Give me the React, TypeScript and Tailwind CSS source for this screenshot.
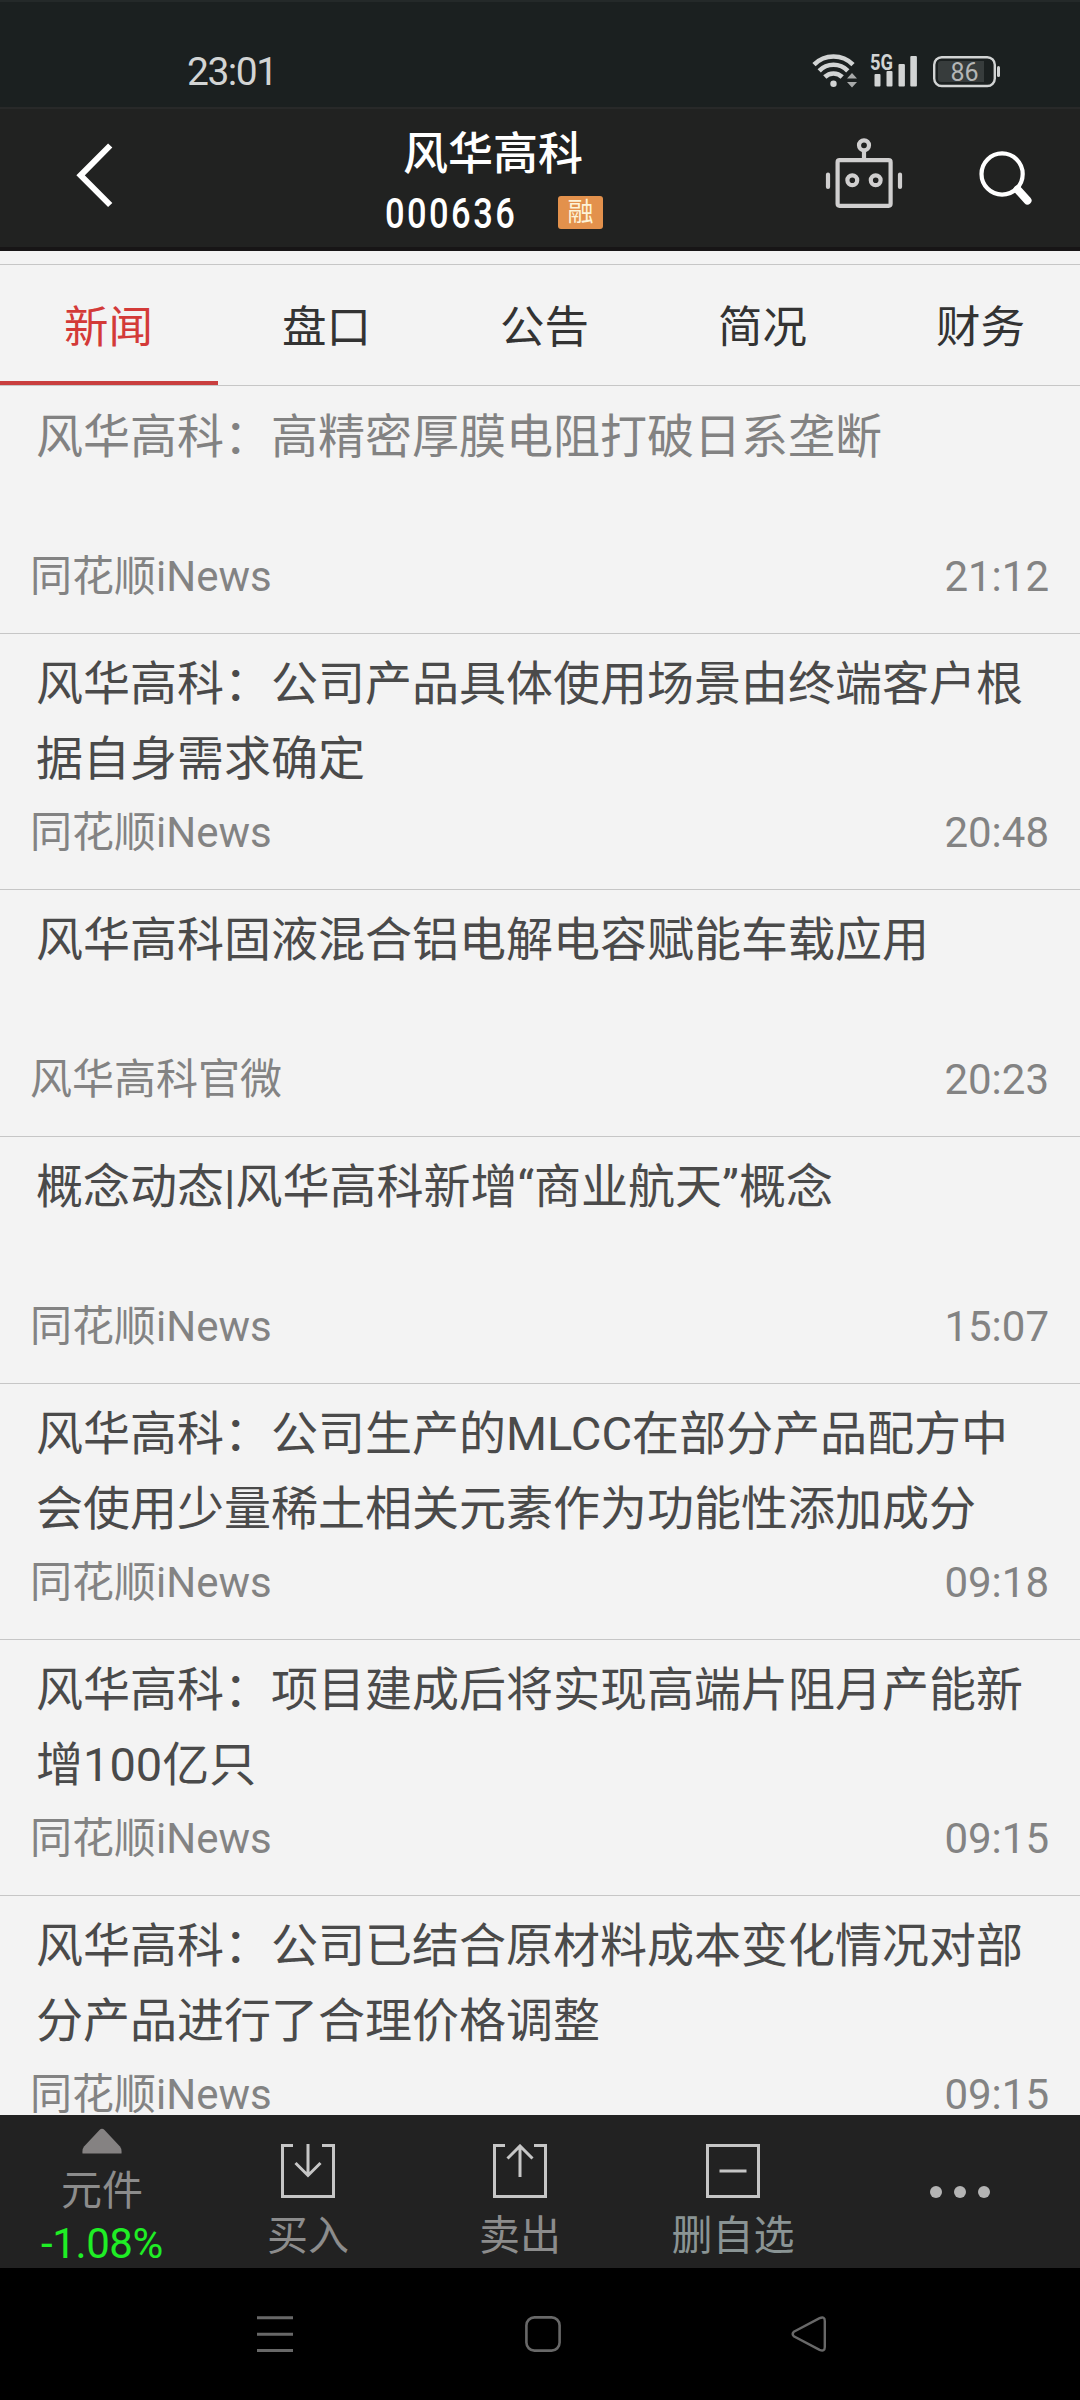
import React from 'react';

interface NewsItem {
  title: string;
  source: string;
  time: string;
  lines: 1 | 2;
  read?: boolean;
}

const tabs = ['新闻', '盘口', '公告', '简况', '财务'];

const news: NewsItem[] = [
  { title: '风华高科：高精密厚膜电阻打破日系垄断', source: '同花顺iNews', time: '21:12', lines: 1, read: true },
  { title: '风华高科：公司产品具体使用场景由终端客户根据自身需求确定', source: '同花顺iNews', time: '20:48', lines: 2 },
  { title: '风华高科固液混合铝电解电容赋能车载应用', source: '风华高科官微', time: '20:23', lines: 1 },
  { title: '概念动态|风华高科新增“商业航天”概念', source: '同花顺iNews', time: '15:07', lines: 1 },
  { title: '风华高科：公司生产的MLCC在部分产品配方中会使用少量稀土相关元素作为功能性添加成分', source: '同花顺iNews', time: '09:18', lines: 2 },
  { title: '风华高科：项目建成后将实现高端片阻月产能新增100亿只', source: '同花顺iNews', time: '09:15', lines: 2 },
  { title: '风华高科：公司已结合原材料成本变化情况对部分产品进行了合理价格调整', source: '同花顺iNews', time: '09:15', lines: 2 },
];

const StatusBar: React.FC = () => (
  <div className="flex h-[107px] shrink-0 items-start justify-between border-t-2 border-[#242929] bg-[#1b2020] pl-[187px] pr-[79px]">
    <span className="mt-[45px] text-[39px] leading-[50px] tracking-[-1.5px] text-[#d2d4d4]">23:01</span>
    <div className="mt-[50px] flex items-start">
      {/* Wifi */}
      <svg className="overflow-visible" width="46" height="36" viewBox="0 0 46 36" fill="none" stroke="#d2d4d4" strokeWidth="4.6">
        <path d="M0 12.6A27.5 27.5 0 0 1 39 12.6" />
        <path d="M5.2 18.8A20 20 0 0 1 33.8 18.8" />
        <path d="M10.8 25A12.4 12.4 0 0 1 28.2 25" />
        <circle cx="19.5" cy="31.7" r="3.2" fill="#d2d4d4" stroke="none" />
        <path d="M33 26.5L38 21L43 26.5ZM33 30L43 30L38 35.4Z" fill="#a8aaaa" stroke="none" />
      </svg>
      {/* Signal */}
      <svg className="ml-[10px] overflow-visible" width="48" height="36" viewBox="0 0 48 36" fill="#d2d4d4">
        <text x="0" y="17.5" fontSize="21.5" fontWeight="700" fontFamily="Roboto" textLength="23" lengthAdjust="spacingAndGlyphs">5G</text>
        <rect x="4.5" y="22" width="6" height="12.5" rx="1" />
        <rect x="16.5" y="19" width="6" height="15.5" rx="1" />
        <rect x="28.5" y="12" width="6.4" height="22.5" rx="1" />
        <rect x="40.3" y="4" width="6.6" height="30.5" rx="1" />
      </svg>
      {/* Battery */}
      <svg className="ml-[15px]" width="68" height="36" viewBox="0 0 68 36">
        <rect x="1.2" y="5.2" width="60.6" height="28.8" rx="7.5" fill="none" stroke="#d2d4d4" strokeWidth="2.4" />
        <path d="M8 9H51V30H8Q5 30 5 27V12Q5 9 8 9Z" fill="#373c3c" />
        <rect x="64" y="14" width="3" height="11" rx="1.5" fill="#d2d4d4" />
        <text x="17.5" y="28.5" fontSize="25" fontFamily="Roboto" fill="#b4b6b6">86</text>
      </svg>
    </div>
  </div>
);

const Header: React.FC = () => (
  <header className="flex h-[144px] shrink-0 items-start border-t-2 border-b-4 border-t-[#282929] border-b-[#171516] bg-[#212221] pl-[76px] pr-[46px]">
    <svg className="mt-[32px]" width="40" height="70" viewBox="0 0 40 70" fill="none" stroke="#fff" strokeWidth="6">
      <path d="M34.2 4.5L4.6 34.3L34.2 64" />
    </svg>
    <div className="ml-[269px] flex w-[218px] flex-col">
      <h1 className="ml-[18px] mt-[19px] text-[45px] font-medium leading-[54px] text-white">风华高科</h1>
      <div className="flex h-[50px] items-start justify-between">
        <span className="mt-[7px] w-[130px] origin-left scale-x-[0.82] whitespace-nowrap text-[42px] font-medium leading-[50px] tracking-[3px] text-white">
          000636
        </span>
        <span className="mt-[14px] h-[33px] w-[45px] rounded-[3px] bg-[#e3914c] text-center text-[26px] leading-[32px] text-[#fdf3d8]">
          融
        </span>
      </div>
    </div>
    <div className="ml-auto flex gap-[75px]">
      {/* Robot */}
      <svg className="mt-[27px]" width="78" height="74" viewBox="0 0 78 74" fill="none" stroke="#d0cfcf" strokeWidth="4.2">
        <circle cx="39" cy="9.3" r="5" />
        <path d="M39 14V24" />
        <rect x="12.6" y="24.2" width="53" height="45.6" rx="2" />
        <circle cx="27.3" cy="44.3" r="4.9" />
        <circle cx="50.7" cy="44.3" r="4.9" />
        <path d="M3 38.5V51M75 38.5V51" strokeLinecap="round" />
      </svg>
      {/* Search */}
      <svg className="mt-[38px]" width="56" height="60" viewBox="0 0 56 60" fill="none" stroke="#fff">
        <circle cx="24.1" cy="27" r="20.6" strokeWidth="4.2" />
        <path d="M39.5 42.5L49.5 53.5" strokeWidth="8" strokeLinecap="round" />
      </svg>
    </div>
  </header>
);

const Tabs: React.FC = () => (
  <nav className="mt-[13px] flex h-[122px] shrink-0 overflow-hidden border-t border-b border-[#c6c6c6]">
    {tabs.map((tab, i) => (
      <div
        key={tab}
        className={
          i === 0
            ? 'w-[218px] shrink-0 border-b-4 border-[#c93e3e] pt-[33px] pr-px text-center text-[44.5px] leading-[60px] text-[#d33a38]'
            : 'w-[218px] shrink-0 pt-[33px] pr-px text-center text-[44.5px] leading-[60px] text-[#333]'
        }
      >
        {tab}
      </div>
    ))}
  </nav>
);

const NewsRow: React.FC<{ item: NewsItem }> = ({ item }) => (
  <article
    className={`flex shrink-0 flex-col justify-between border-b border-[#c6c6c6] pt-[12px] pb-[31px] ${
      item.lines === 2 ? 'h-[256px]' : 'h-[247px]'
    }`}
  >
    <h2 className={`ml-[36px] w-[992px] text-[47px] leading-[75px] ${item.read ? 'text-[#828282]' : 'text-[#4a4a4a]'}`}>
      {item.title}
    </h2>
    <div className="flex justify-between pl-[30px] pr-[31px] text-[42px] leading-[50px] text-[#838383]">
      <span>{item.source}</span>
      <span>{item.time}</span>
    </div>
  </article>
);

const BottomBar: React.FC = () => (
  <footer className="flex h-[153px] shrink-0 bg-[#222] text-[41px] leading-[50px] text-[#8c8c8c]">
    <div className="flex w-[204px] flex-col items-center">
      <svg className="mt-[13px] shrink-0" width="40" height="26" viewBox="0 0 40 26" fill="#858282">
        <path d="M17.5 2Q20 -0.5 22.5 2L38 18.5Q40 21 39.5 25.5H0.5Q0 21 2 18.5Z" />
      </svg>
      <span className="mt-[12px]">元件</span>
      <span className="mt-[3px] text-[42px] tracking-[-0.4px] text-[#1fee25]">-1.08%</span>
    </div>
    <div className="flex w-[208px] flex-col items-center">
      <svg className="mt-[29px] shrink-0" width="54" height="54" viewBox="0 0 54 54" fill="none" stroke="#c6c6c6" strokeWidth="3">
        <path d="M12 1.5H1.5V52.5H52.5V1.5H41" />
        <path d="M27 0V31M14.5 19L27 31.5L39.5 19" />
      </svg>
      <span className="mt-[13px]">买入</span>
    </div>
    <div className="flex w-[216px] flex-col items-center">
      <svg className="mt-[29px] shrink-0" width="54" height="54" viewBox="0 0 54 54" fill="none" stroke="#c6c6c6" strokeWidth="3">
        <path d="M12 1.5H1.5V52.5H52.5V1.5H41" />
        <path d="M27 33V2M14.5 14.5L27 2L39.5 14.5" />
      </svg>
      <span className="mt-[13px]">卖出</span>
    </div>
    <div className="flex w-[210px] flex-col items-center">
      <svg className="mt-[29px] shrink-0" width="54" height="54" viewBox="0 0 54 54" fill="none" stroke="#c6c6c6" strokeWidth="3">
        <path d="M1.5 1.5H52.5V52.5H1.5ZM13.5 27H40.5" />
      </svg>
      <span className="mt-[13px] text-[#8a9494]">删自选</span>
    </div>
    <div className="flex w-[242px] justify-center gap-[12px] pl-[2px] pt-[71px]">
      <span className="size-[12px] rounded-full bg-[#b4b4b4]" />
      <span className="size-[12px] rounded-full bg-[#b4b4b4]" />
      <span className="size-[12px] rounded-full bg-[#b4b4b4]" />
    </div>
  </footer>
);

const SystemNav: React.FC = () => (
  <div className="flex h-[132px] shrink-0 items-start bg-black pl-[257px] pt-[48px]">
    <svg width="36" height="36" viewBox="0 0 36 36" fill="none" stroke="#686868" strokeWidth="3">
      <path d="M0 1.7H36M0 18.2H36M0 34.4H36" />
    </svg>
    <svg className="ml-[232px]" width="36" height="36" viewBox="0 0 36 36" fill="none" stroke="#686868" strokeWidth="2.6">
      <rect x="1.4" y="1.4" width="33.2" height="33.2" rx="8" />
    </svg>
    <svg className="ml-[230px]" width="36" height="36" viewBox="0 0 36 36" fill="none" stroke="#686868" strokeWidth="2.4">
      <path d="M2.8 15.8L28.6 2.2Q33.8 0 33.8 5V31Q33.8 36 28.6 33.8L2.8 20.2Q0.6 18 2.8 15.8Z" />
    </svg>
  </div>
);

const App: React.FC = () => {
  return (
    <div className="flex h-[2400px] w-[1080px] flex-col overflow-hidden bg-[#f3f3f3] font-['Roboto','Noto_Sans_CJK_SC',sans-serif]">
      <StatusBar />
      <Header />
      <Tabs />
      <main className="flex min-h-0 flex-1 flex-col overflow-hidden pt-px">
        {news.map((item) => (
          <NewsRow key={item.title} item={item} />
        ))}
      </main>
      <BottomBar />
      <SystemNav />
    </div>
  );
};

export default App;
